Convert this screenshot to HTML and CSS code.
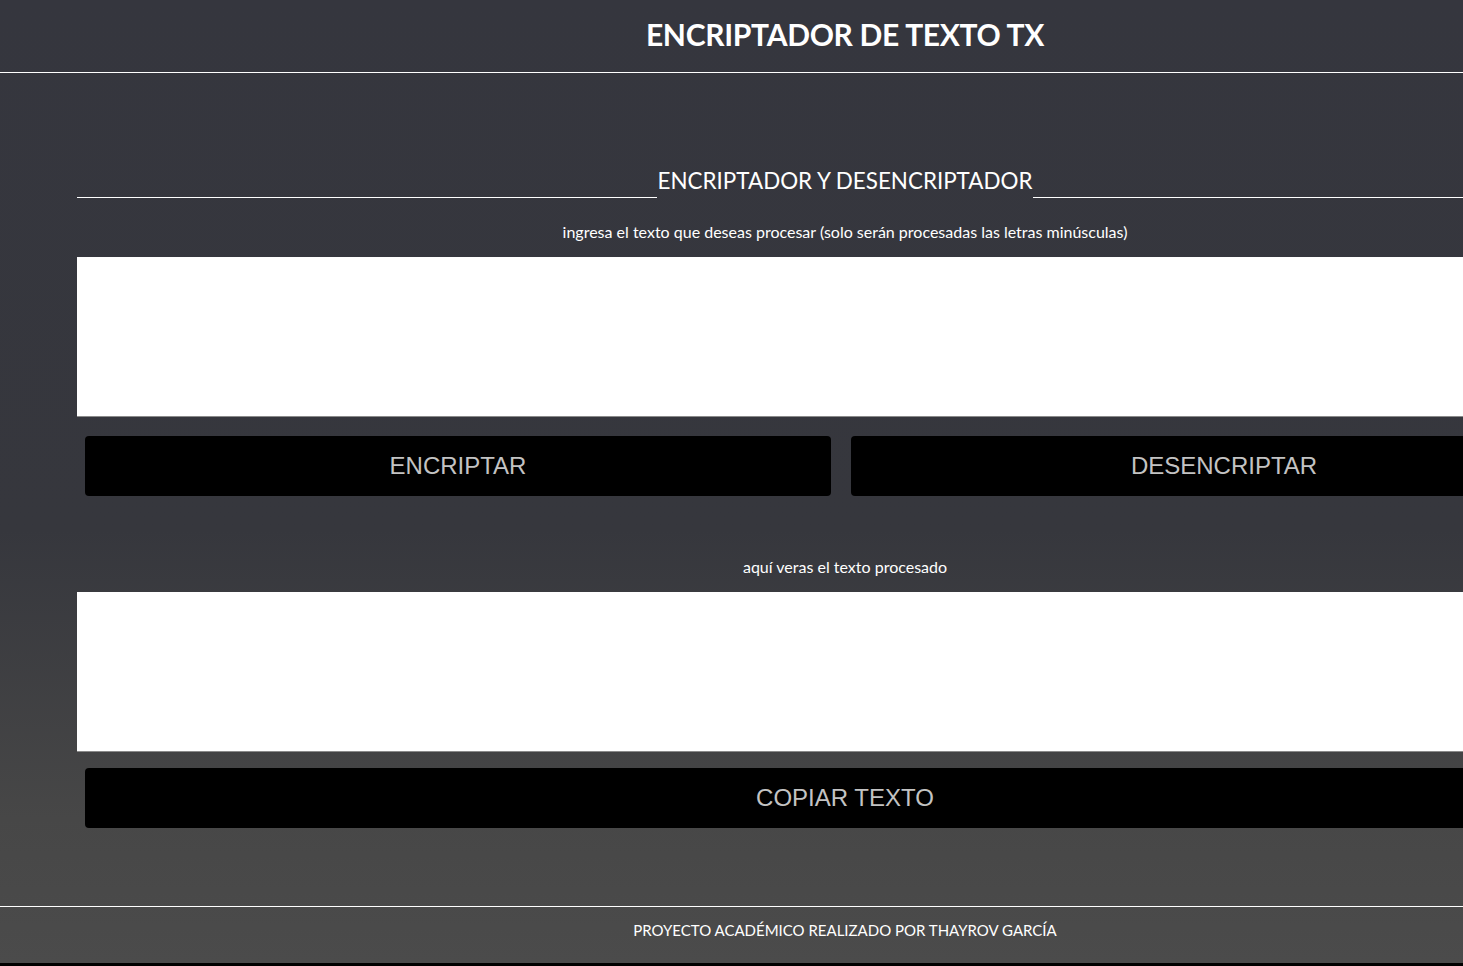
FILE: index.html
```html
<!DOCTYPE html>
<html lang="es">
  <head>
    <meta charset="UTF-8" />
    <meta name="viewport" content="width=device-width, initial-scale=1.0" />
    <title>Encriptador de texto TX</title>
    <link rel="stylesheet" href="styles.css">
  </head>
  <body>
    <div class="page">
      <header class="main-header">
        <h1 class="brand-title">ENCRIPTADOR DE TEXTO TX</h1>
      </header>

      <main class="main-content">
        <h2 class="section-title"><span>ENCRIPTADOR Y DESENCRIPTADOR</span></h2>

        <p class="field-label">ingresa el texto que deseas procesar (solo serán procesadas las letras minúsculas)</p>
        <textarea id="input-text" class="text-box"></textarea>

        <div class="button-row">
          <button class="action-button" id="btn-encrypt">ENCRIPTAR</button>
          <button class="action-button" id="btn-decrypt">DESENCRIPTAR</button>
        </div>

        <p class="field-label output-label">aquí veras el texto procesado</p>
        <textarea id="output-text" class="text-box" readonly></textarea>

        <button class="action-button copy-button" id="btn-copy">COPIAR TEXTO</button>
      </main>

      <footer class="main-footer">
        <p>PROYECTO ACADÉMICO REALIZADO POR THAYROV GARCÍA</p>
      </footer>
    </div>
  </body>
</html>
```

FILE: styles.css
```css
* {
  margin: 0;
  padding: 0;
  box-sizing: border-box;
}

html {
  background: #000;
  overflow: hidden;
}

body {
  font-family: Lato, "Open Sans", sans-serif;
  color: #fff;
}

.page {
  width: 1690px;
  height: 963px;
  display: flex;
  flex-direction: column;
  background: linear-gradient(to bottom, #35363e 0%, #36373d 55%, #474747 85%, #4b4b4b 100%);
}

/* Header */
.main-header {
  height: 73px;
  border-bottom: 1px solid #fff;
  display: flex;
  align-items: center;
  justify-content: center;
}

.brand-title {
  font-size: 30px;
  font-weight: 700;
  letter-spacing: -0.3px;
  padding-bottom: 5px;
}

/* Main */
.main-content {
  flex: 1;
  margin: 0 77px;
  padding-top: 90px;
}

.section-title {
  display: flex;
  align-items: flex-end;
  font-size: 22.4px;
  font-weight: 400;
  line-height: 35px;
}

.section-title::before,
.section-title::after {
  content: "";
  flex: 1;
  border-bottom: 1px solid #fff;
}

.section-title span {
  padding: 0 1px;
}

.field-label {
  text-align: center;
  font-size: 16px;
  line-height: 20px;
  margin: 24px 0 15px;
}

.text-box {
  display: block;
  width: 100%;
  height: 160px;
  background: #fff;
  border: none;
  border-bottom: 1px solid #8a8a8a;
  resize: none;
  outline: none;
}

.button-row {
  display: grid;
  grid-template-columns: 746px 746px;
  gap: 20px;
  padding-left: 8px;
  margin-top: 19px;
}

.action-button {
  height: 60px;
  background: #000;
  color: #c3c3c3;
  border: none;
  border-radius: 4px;
  font-family: "Liberation Sans", Arial, sans-serif;
  font-size: 24px;
  cursor: pointer;
}

.output-label {
  margin: 61px 0 15px;
}

.copy-button {
  display: block;
  width: 1520px;
  margin: 16px 8px 0;
}

/* Footer */
.main-footer {
  height: 57px;
  border-top: 1px solid #fff;
  display: flex;
  align-items: center;
  justify-content: center;
  font-size: 15px;
  padding-bottom: 10px;
}
```
